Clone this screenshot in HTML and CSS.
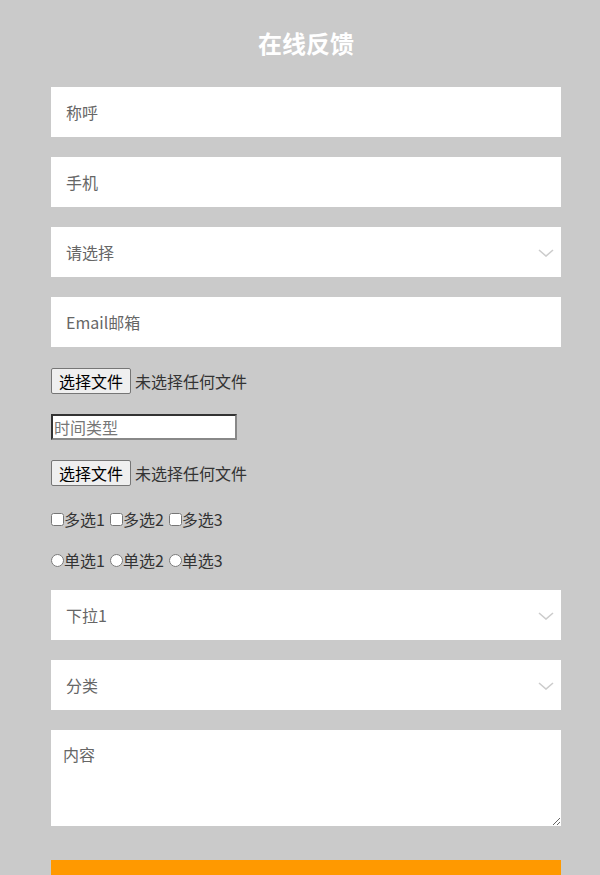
FILE: index.html
```html
<!DOCTYPE html>
<html lang="zh-CN">
<head>
  <meta charset="UTF-8">
  <meta name="viewport" content="width=device-width, initial-scale=1.0">
  <title>在线反馈</title>
  <link rel="stylesheet" href="styles.css">
</head>
<body>
  <form class="feedback-form">
    <h2 class="form-title">在线反馈</h2>

    <input class="field" type="text" placeholder="称呼">
    <input class="field" type="text" placeholder="手机">

    <div class="select-wrap">
      <select class="field select">
        <option>请选择</option>
      </select>
      <svg class="chevron" viewBox="0 0 16 8" fill="none" xmlns="http://www.w3.org/2000/svg">
        <path d="M1 1L8 7L15 1" stroke="currentColor" stroke-width="1.6"/>
      </svg>
    </div>

    <input class="field" type="text" placeholder="Email邮箱">

    <label class="row file-row">
      <input class="file-hidden" type="file">
      <span class="file-btn">选择文件</span>
      <span class="file-name">未选择任何文件</span>
    </label>

    <div class="row">
      <input class="plain-input" type="text" placeholder="时间类型">
    </div>

    <label class="row file-row">
      <input class="file-hidden" type="file">
      <span class="file-btn">选择文件</span>
      <span class="file-name">未选择任何文件</span>
    </label>

    <div class="row checks">
      <label><input type="checkbox">多选1</label>
      <label><input type="checkbox">多选2</label>
      <label><input type="checkbox">多选3</label>
    </div>

    <div class="row radios">
      <label><input type="radio" name="r">单选1</label>
      <label><input type="radio" name="r">单选2</label>
      <label><input type="radio" name="r">单选3</label>
    </div>

    <div class="select-wrap">
      <select class="field select">
        <option>下拉1</option>
      </select>
      <svg class="chevron" viewBox="0 0 16 8" fill="none" xmlns="http://www.w3.org/2000/svg">
        <path d="M1 1L8 7L15 1" stroke="currentColor" stroke-width="1.6"/>
      </svg>
    </div>

    <div class="select-wrap">
      <select class="field select">
        <option>分类</option>
      </select>
      <svg class="chevron" viewBox="0 0 16 8" fill="none" xmlns="http://www.w3.org/2000/svg">
        <path d="M1 1L8 7L15 1" stroke="currentColor" stroke-width="1.6"/>
      </svg>
    </div>

    <textarea class="content" placeholder="内容"></textarea>

    <button class="submit" type="button">提交</button>
  </form>
</body>
</html>
```

FILE: styles.css
```css
body {
  margin: 0;
  background-color: #cacaca;
  font-family: "Noto Sans CJK SC", "Noto Sans", sans-serif;
  font-size: 16px;
  color: #333;
}

.feedback-form {
  width: 510px;
  margin-left: 51px;
  padding-top: 27px;
}

.form-title {
  margin: 0 0 28px;
  font-size: 24px;
  line-height: 32px;
  font-weight: bold;
  color: #fff;
  text-align: center;
}

.field {
  display: block;
  box-sizing: border-box;
  width: 100%;
  height: 50px;
  margin: 0 0 20px;
  padding: 0 15px;
  border: none;
  border-radius: 0;
  background: #fff;
  font-family: inherit;
  font-size: 16px;
  color: #666;
  outline: none;
}

.field::placeholder {
  color: #666;
}

.select-wrap {
  position: relative;
}

.select {
  appearance: none;
  -webkit-appearance: none;
}

.chevron {
  position: absolute;
  right: 7px;
  top: 22px;
  width: 16px;
  height: 8px;
  color: #ccc;
  pointer-events: none;
}

.row {
  display: flex;
  align-items: center;
  height: 28px;
  margin-bottom: 18px;
}

.file-row {
  cursor: pointer;
}

.file-hidden {
  display: none;
}

.file-btn {
  box-sizing: border-box;
  height: 26px;
  padding: 0 7px;
  line-height: 24px;
  border: 1px solid #767676;
  border-radius: 2px;
  background: #efefef;
  color: #000;
}

.file-name {
  margin-left: 4px;
}

.plain-input {
  box-sizing: border-box;
  width: 186px;
  height: 26px;
  padding: 0 1px;
  border-style: solid;
  border-width: 2px;
  border-color: #333 #888 #888 #333;
  background: #fff;
  font-family: inherit;
  font-size: 16px;
  outline: none;
}

.plain-input::placeholder {
  color: #777;
}

.checks,
.radios {
  gap: 5px;
}

.checks {
  margin-bottom: 13px;
}

.radios {
  margin-bottom: 16px;
}

.checks label,
.radios label {
  display: flex;
  align-items: center;
}

.checks input,
.radios input {
  width: 13px;
  height: 13px;
  margin: 0;
}

.content {
  display: block;
  box-sizing: border-box;
  width: 100%;
  height: 96px;
  margin: 0 0 34px;
  padding: 12px;
  border: none;
  border-radius: 0;
  background: #fff;
  font-family: inherit;
  font-size: 16px;
  color: #666;
  outline: none;
}

.content::placeholder {
  color: #666;
}

.submit {
  display: block;
  width: 100%;
  height: 64px;
  border: none;
  background: #ff9900;
  color: #fff;
  font-family: inherit;
  font-size: 18px;
  cursor: pointer;
}
```
